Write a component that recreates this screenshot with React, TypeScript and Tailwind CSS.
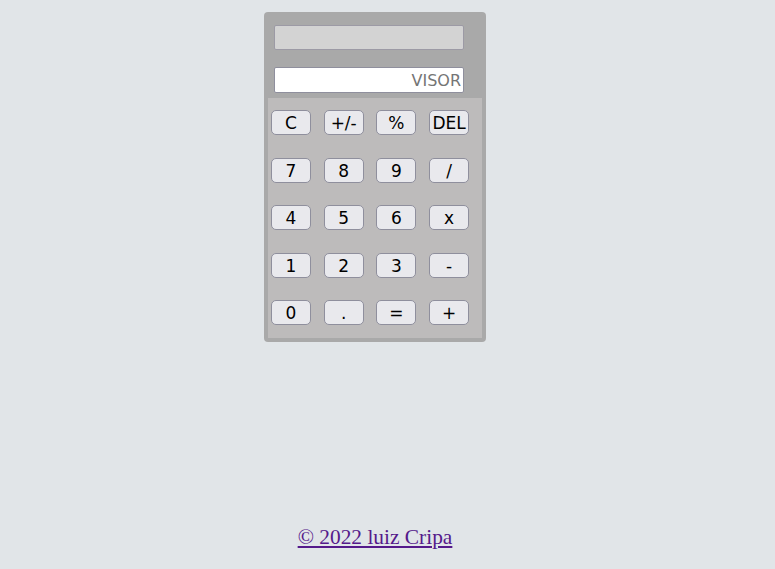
import React from 'react';

const keys = ['C', '+/-', '%', 'DEL', '7', '8', '9', '/', '4', '5', '6', 'x', '1', '2', '3', '-', '0', '.', '=', '+'];

const App: React.FC = () => {
  return (
    <div className="min-h-[569px] w-full bg-[#e1e5e8]">
      <div className="w-[750px] flex flex-col items-center pt-[12px]">
        <div className="w-[222px] h-[330px] bg-[#a9a9a9] rounded-[4px] px-[4px] pb-[4px] flex flex-col">
          <div className="h-[86px] pt-[13px] px-[6px] flex flex-col">
            <div className="h-[25px] w-[190px] bg-[#d3d3d3] border border-[#9c9aa5] rounded-[2px]"></div>
            <input
              placeholder="VISOR"
              readOnly
              className="mt-[17px] h-[26px] w-[190px] bg-white border border-[#8f8f9d] rounded-[2px] px-[2px] text-right text-[16px] text-black placeholder:text-[#757575] outline-none font-['DejaVu_Sans',sans-serif]"
            />
          </div>
          <div className="flex-1 bg-[#bdbbbb] pt-[12px] pl-[3px]">
            <div className="grid grid-cols-[repeat(4,40px)] gap-x-[12.7px] gap-y-[22.5px]">
              {keys.map((k) => (
                <button
                  key={k}
                  className="h-[25px] w-[40px] bg-[#e9e9ed] border border-[#8f8f9d] rounded-[5px] pt-[2px] text-[17px] text-black leading-none flex items-center justify-center font-['DejaVu_Sans',sans-serif]"
                >
                  {k}
                </button>
              ))}
            </div>
          </div>
        </div>
        <a href="#" className="mt-[183px] text-[21.4px] leading-[24px] text-[#551a8b] underline font-['Liberation_Serif',serif]">
          © 2022 luiz Cripa
        </a>
      </div>
    </div>
  );
};

export default App;
